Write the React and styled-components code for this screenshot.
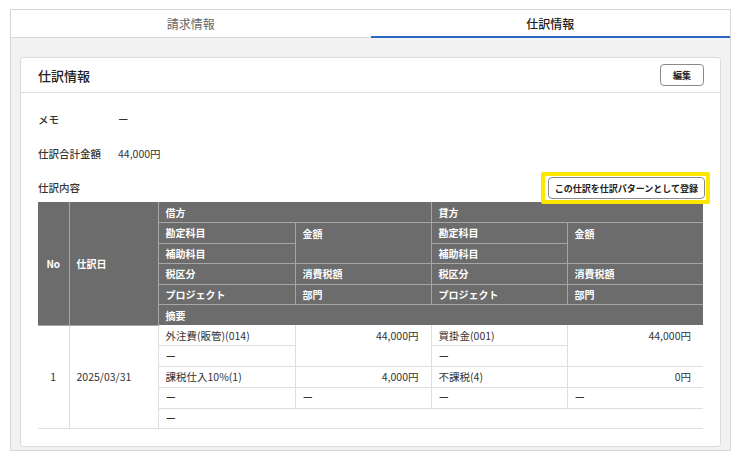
import React from "react";
import styled, { createGlobalStyle, css } from "styled-components";

const Global = createGlobalStyle`
  html, body { margin: 0; padding: 0; background: #ffffff; }
  body { font-family: "Noto Sans CJK JP", "Noto Sans", sans-serif; color: #333; }
  * { box-sizing: border-box; }
`;

const Frame = styled.div`
  margin: 9px 10px 0;
  width: 721px;
  height: 442px;
  border: 1px solid #d6d6d6;
  background: #f2f2f2;
  display: flex;
  flex-direction: column;
`;

const Tabs = styled.div`
  display: flex;
  height: 28px;
  background: #fff;
  border-bottom: 1px solid #d9d9d9;
`;

const Tab = styled.div`
  flex: 1;
  display: flex;
  align-items: center;
  justify-content: center;
  font-size: 12px;
  font-weight: ${(p) => (p.$active ? 500 : 400)};
  color: ${(p) => (p.$active ? "#222" : "#666")};
  border-bottom: 2px solid ${(p) => (p.$active ? "#2b66c6" : "transparent")};
  margin-bottom: -1px;
  padding-top: 1px;
`;

const Content = styled.div`
  flex: 1;
  display: flex;
  flex-direction: column;
  padding: 19px 9px 3px;
  min-height: 0;
`;

const Card = styled.section`
  flex: 1;
  background: #fff;
  border: 1px solid #dcdcdc;
  border-radius: 3px;
  overflow: hidden;
  display: flex;
  flex-direction: column;
`;

const CardHeader = styled.header`
  height: 35px;
  flex: none;
  display: flex;
  align-items: center;
  justify-content: space-between;
  padding: 0 16px 0 17px;
  border-bottom: 1px solid #dddddd;
`;

const Title = styled.h2`
  margin: 0;
  font-size: 13px;
  font-weight: 500;
  color: #222;
`;

const Button = styled.button`
  position: relative;
  height: 22px;
  padding: 0 ${(p) => (p.$wide ? "6px" : "12px")};
  background: #fff;
  border: 1px solid #8a8a8a;
  border-radius: 4px;
  font-family: inherit;
  font-size: 9px;
  font-weight: 700;
  color: #222;
  cursor: pointer;
  ${(p) =>
    p.$highlight &&
    css`
      &::after {
        content: "";
        position: absolute;
        inset: -6px -6px -6px -8px;
        border: 4px solid #ffe600;
        border-radius: 2px;
        pointer-events: none;
      }
    `}
`;

const CardBody = styled.div`
  padding: 9px 17px 0;
`;

const InfoRow = styled.div`
  height: 34px;
  display: flex;
  align-items: center;
  font-size: 10.5px;
`;

const Label = styled.div`
  width: 80px;
  font-weight: 500;
  color: #333;
`;

const Value = styled.div`
  color: #333;
`;

const SectionHead = styled.div`
  height: 32px;
  display: flex;
  align-items: flex-end;
  justify-content: space-between;
  padding-bottom: 3px;
  margin-right: -2px;
  font-size: 10.5px;
`;

const SectionLabel = styled.div`
  line-height: 22px;
  font-weight: 500;
`;

const Table = styled.table`
  width: 665px;
  table-layout: fixed;
  border-collapse: collapse;
  font-size: 10.5px;
`;

const HeadRow = styled.tr`
  height: 20.5px;
`;

const Th = styled.th`
  background: #6c6c6c;
  color: #fff;
  font-size: 10px;
  font-weight: 700;
  text-align: ${(p) => (p.$center ? "center" : "left")};
  vertical-align: ${(p) => (p.$top ? "top" : "middle")};
  padding: ${(p) => (p.$top ? "4px 7px 0" : "0 7px")};
  border: 1px solid #a6a6a6;
  border-top: none;
  &:first-child { border-left: none; }
  line-height: 13px;
  ${(p) => (p.$last ? "border-right: none;" : "")}
  ${(p) => (p.$bottom ? "border-bottom: none;" : "")}
`;

const BodyRow = styled.tr`
  height: 20.8px;
`;

const Td = styled.td`
  color: #333;
  padding: ${(p) => (p.$top ? "4px 12px 0 7px" : "0 7px")};
  text-align: ${(p) => (p.$right ? "right" : p.$center ? "center" : "left")};
  vertical-align: ${(p) => (p.$top ? "top" : "middle")};
  border: 1px solid #dedede;
  border-top: none;
  line-height: 13px;
  ${(p) => (p.$right && !p.$top ? "padding-right: 12px;" : "")}
  ${(p) => (p.$first ? "border-left: none;" : "")}
  ${(p) => (p.$last ? "border-right: none;" : "")}
`;

const DASH = "ー";

export default function App() {
  return (
    <>
      <Global />
      <Frame>
        <Tabs>
          <Tab>請求情報</Tab>
          <Tab $active>仕訳情報</Tab>
        </Tabs>
        <Content>
          <Card>
            <CardHeader>
              <Title>仕訳情報</Title>
              <Button>編集</Button>
            </CardHeader>
            <CardBody>
              <InfoRow>
                <Label>メモ</Label>
                <Value>{DASH}</Value>
              </InfoRow>
              <InfoRow>
                <Label>仕訳合計金額</Label>
                <Value>44,000円</Value>
              </InfoRow>
              <SectionHead>
                <SectionLabel>仕訳内容</SectionLabel>
                <Button $wide $highlight>この仕訳を仕訳パターンとして登録</Button>
              </SectionHead>
              <Table>
                <colgroup>
                  <col style={{ width: 31 }} />
                  <col style={{ width: 89 }} />
                  <col style={{ width: 137 }} />
                  <col style={{ width: 136 }} />
                  <col style={{ width: 136 }} />
                  <col style={{ width: 136 }} />
                </colgroup>
                <thead>
                  <HeadRow>
                    <Th rowSpan={6} $center>No</Th>
                    <Th rowSpan={6}>仕訳日</Th>
                    <Th colSpan={2}>借方</Th>
                    <Th colSpan={2} $last>貸方</Th>
                  </HeadRow>
                  <HeadRow>
                    <Th>勘定科目</Th>
                    <Th rowSpan={2} $top>金額</Th>
                    <Th>勘定科目</Th>
                    <Th rowSpan={2} $top $last>金額</Th>
                  </HeadRow>
                  <HeadRow>
                    <Th>補助科目</Th>
                    <Th>補助科目</Th>
                  </HeadRow>
                  <HeadRow>
                    <Th>税区分</Th>
                    <Th>消費税額</Th>
                    <Th>税区分</Th>
                    <Th $last>消費税額</Th>
                  </HeadRow>
                  <HeadRow>
                    <Th>プロジェクト</Th>
                    <Th>部門</Th>
                    <Th>プロジェクト</Th>
                    <Th $last>部門</Th>
                  </HeadRow>
                  <HeadRow>
                    <Th colSpan={4} $last $bottom>摘要</Th>
                  </HeadRow>
                </thead>
                <tbody>
                  <BodyRow>
                    <Td rowSpan={5} $center $first>1</Td>
                    <Td rowSpan={5}>2025/03/31</Td>
                    <Td>外注費(販管)(014)</Td>
                    <Td rowSpan={2} $right $top>44,000円</Td>
                    <Td>買掛金(001)</Td>
                    <Td rowSpan={2} $right $top $last>44,000円</Td>
                  </BodyRow>
                  <BodyRow>
                    <Td>{DASH}</Td>
                    <Td>{DASH}</Td>
                  </BodyRow>
                  <BodyRow>
                    <Td>課税仕入10%(1)</Td>
                    <Td $right>4,000円</Td>
                    <Td>不課税(4)</Td>
                    <Td $right $last>0円</Td>
                  </BodyRow>
                  <BodyRow>
                    <Td>{DASH}</Td>
                    <Td>{DASH}</Td>
                    <Td>{DASH}</Td>
                    <Td $last>{DASH}</Td>
                  </BodyRow>
                  <BodyRow>
                    <Td colSpan={4} $last>{DASH}</Td>
                  </BodyRow>
                </tbody>
              </Table>
            </CardBody>
          </Card>
        </Content>
      </Frame>
    </>
  );
}
